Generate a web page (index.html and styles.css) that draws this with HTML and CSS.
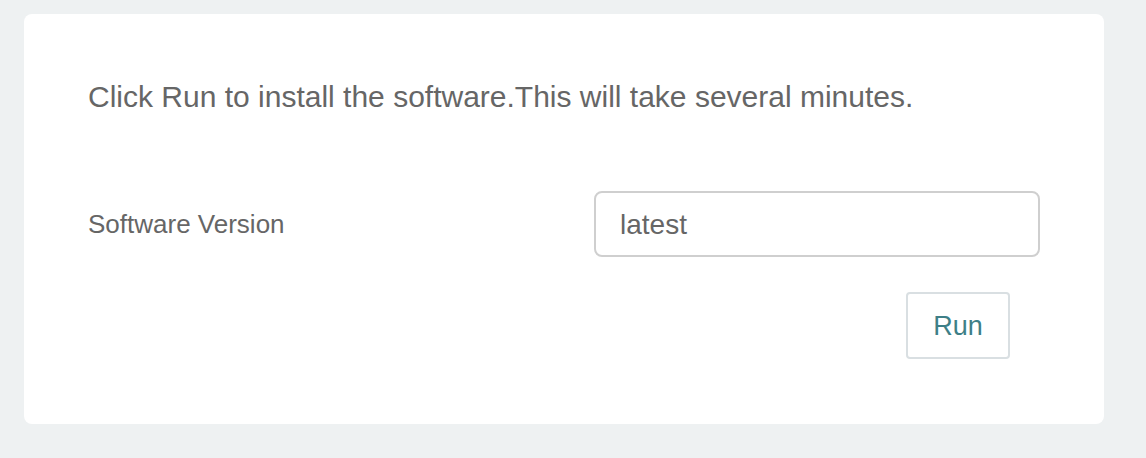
FILE: index.html
```html
<!DOCTYPE html>
<html>
<head>
<meta charset="utf-8">
<link rel="stylesheet" href="styles.css">
</head>
<body>
<div class="page">
  <div class="card">
    <p class="intro">Click Run to install the software.This will take several minutes.</p>
    <div class="form-row">
      <label class="label" for="ver">Software Version</label>
      <input class="input" id="ver" type="text" value="latest">
    </div>
    <div class="actions">
      <button class="btn">Run</button>
    </div>
  </div>
</div>
</body>
</html>
```
FILE: styles.css
```css
html, body {
  margin: 0;
  padding: 0;
  background: #eef1f2;
}
body {
  font-family: "Liberation Sans", Arial, sans-serif;
  color: #666;
}
.page {
  padding: 14px 42px 34px 24px;
}
.card {
  background: #fff;
  border-radius: 8px;
  height: 410px;
  box-sizing: border-box;
  padding: 65px 64px 0 64px;
}
.intro {
  margin: 0;
  font-size: 30px;
  line-height: 36px;
  color: #666;
}
.form-row {
  margin-top: 76px;
  display: grid;
  grid-template-columns: 1fr 446px;
  align-items: center;
}
.label {
  font-size: 26px;
  color: #666;
}
.input {
  height: 66px;
  box-sizing: border-box;
  border: 2px solid #cfcfcf;
  border-radius: 8px;
  padding: 2px 24px 0 24px;
  font-family: "Liberation Sans", Arial, sans-serif;
  font-size: 28px;
  color: #666;
  outline: none;
}
.actions {
  display: flex;
  justify-content: flex-end;
  margin-top: 35px;
  padding-right: 30px;
}
.btn {
  width: 104px;
  height: 67px;
  padding-top: 2px;
  background: #fff;
  border: 2px solid #d9dfe2;
  border-radius: 4px;
  font-family: "Liberation Sans", Arial, sans-serif;
  font-size: 27px;
  color: #3e7f87;
  cursor: pointer;
}
```
